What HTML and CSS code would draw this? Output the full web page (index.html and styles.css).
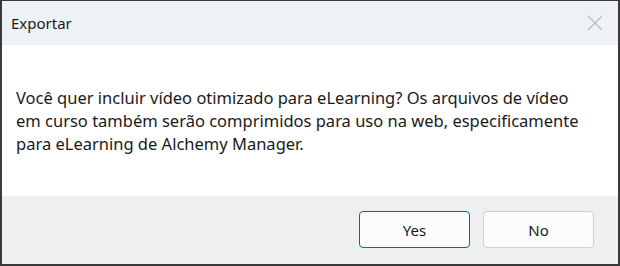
FILE: index.html
```html
<!DOCTYPE html>
<html>
<head>
<meta charset="utf-8">
<link rel="stylesheet" href="styles.css">
</head>
<body>
<div class="dialog">
  <div class="titlebar">
    <span class="title">Exportar</span>
    <svg class="close" width="16" height="16" viewBox="0 0 16 16"><path d="M1 1L15 15M15 1L1 15" stroke="#b5b8bc" stroke-width="1.1" fill="none"/></svg>
  </div>
  <div class="content">
    <p class="message">Você quer incluir vídeo otimizado para eLearning? Os arquivos de vídeo em curso também serão comprimidos para uso na web, especificamente para eLearning de Alchemy Manager.</p>
  </div>
  <div class="footer">
    <button class="btn primary">Yes</button>
    <button class="btn">No</button>
  </div>
</div>
</body>
</html>
```
FILE: styles.css
```css
html, body {
  margin: 0;
  padding: 0;
  background: #ffffff;
}
.dialog {
  box-sizing: border-box;
  width: 620px;
  height: 266px;
  border: 2px solid #3a3a3a;
  border-top-width: 1px;
  display: flex;
  flex-direction: column;
  font-family: "Noto Sans", "Open Sans", sans-serif;
  color: #1a1a1a;
}
.titlebar {
  height: 44px;
  background: #eef2f6;
  display: flex;
  align-items: center;
  justify-content: space-between;
  padding: 0 15px 0 9px;
  flex: none;
}
.title {
  font-size: 15px;
}
.close {
  display: block;
}
.content {
  background: #ffffff;
  flex: 1;
  padding: 41px 14px 0 14px;
}
.message {
  margin: 0;
  font-size: 16.5px;
  line-height: 23px;
  width: 575px;
}
.footer {
  height: 68px;
  flex: none;
  background: #efefef;
  display: flex;
  justify-content: flex-end;
  align-items: flex-start;
  gap: 13px;
  padding: 15px 24px 0 0;
  box-sizing: border-box;
}
.btn {
  width: 111px;
  height: 37px;
  box-sizing: border-box;
  border: 1px solid #d0d0d0;
  border-radius: 4px;
  background: #fcfcfc;
  font-family: "Noto Sans", "Open Sans", sans-serif;
  font-size: 15px;
  color: #1a1a1a;
  padding: 0;
}
.btn.primary {
  border: 1px solid #0067c0;
}
```
